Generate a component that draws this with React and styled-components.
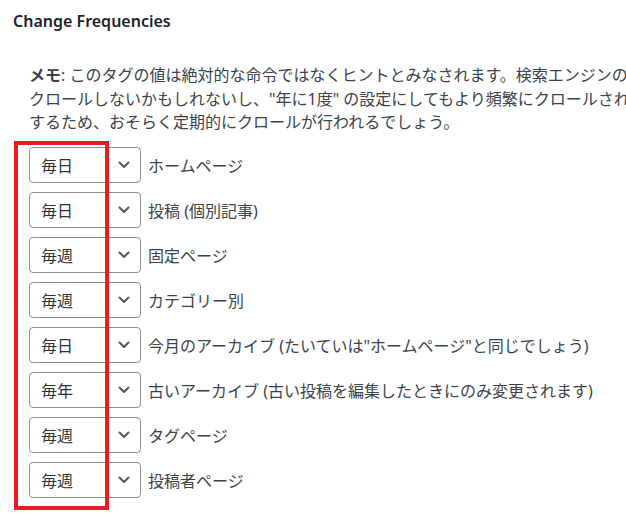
import React from 'react'
import styled, { createGlobalStyle } from 'styled-components';

const GlobalStyle = createGlobalStyle`
body {
  margin: 0;
  background: #ffffff;
  overflow: hidden;
  font-family: "Noto Sans", "Noto Sans CJK JP", sans-serif;
}
`

const Page = styled.div`
width: 626px;
height: 524px;
overflow: hidden;
padding: 11px 0 0 13px;
box-sizing: border-box;
`

const Heading = styled.h3`
margin: 0;
font-size: 16px;
line-height: 20px;
font-weight: 600;
color: #1d2327;
`

const Section = styled.div`
margin: 33px 0 0 16px;
`

const Note = styled.p`
margin: 0;
width: 900px;
font-size: 16px;
line-height: 23.5px;
color: #3c434a;
`

const Line = styled.span`
display: block;
white-space: nowrap;
`

const List = styled.div`
position: relative;
display: flex;
flex-direction: column;
gap: 9px;
margin-top: 12px;
`

const Row = styled.div`
display: flex;
align-items: center;
height: 36px;
`

const Select = styled.div`
width: 112px;
height: 36px;
box-sizing: border-box;
border: 1px solid #8c8f94;
border-radius: 4px;
background: #fff;
display: flex;
align-items: center;
justify-content: space-between;
padding: 0 10px 0 11px;
font-size: 16px;
color: #2c3338;
`

const Label = styled.span`
margin-left: 7px;
font-size: 16px;
color: #3c434a;
white-space: nowrap;
`

const Highlight = styled.div`
position: absolute;
top: -6px;
left: -15px;
width: 95px;
height: 369px;
box-sizing: border-box;
border: 4px solid #e81c24;
pointer-events: none;
`

const Chevron = () => (
  <svg width="12" height="8" viewBox="0 0 12 8">
    <polyline points="1.5,1.5 6,6 10.5,1.5" fill="none" stroke="#50575e" strokeWidth="2" strokeLinecap="round" strokeLinejoin="round" />
  </svg>
)

const rows = [
  { value: '毎日', label: 'ホームページ' },
  { value: '毎日', label: '投稿 (個別記事)' },
  { value: '毎週', label: '固定ページ' },
  { value: '毎週', label: 'カテゴリー別' },
  { value: '毎日', label: '今月のアーカイブ (たいていは"ホームページ"と同じでしょう)' },
  { value: '毎年', label: '古いアーカイブ (古い投稿を編集したときにのみ変更されます)' },
  { value: '毎週', label: 'タグページ' },
  { value: '毎週', label: '投稿者ページ' },
]

const App = () => {
  return (
    <Page>
      <GlobalStyle />
      <Heading>Change Frequencies</Heading>
      <Section>
        <Note>
          <Line><b>メモ</b>: このタグの値は絶対的な命令ではなくヒントとみなされます。検索エンジンの</Line>
          <Line>クロールしないかもしれないし、"年に1度" の設定にしてもより頻繁にクロールされ</Line>
          <Line>するため、おそらく定期的にクロールが行われるでしょう。</Line>
        </Note>
        <List>
          {rows.map((r, i) => (
            <Row key={i}>
              <Select>
                <span>{r.value}</span>
                <Chevron />
              </Select>
              <Label>{r.label}</Label>
            </Row>
          ))}
          <Highlight />
        </List>
      </Section>
    </Page>
  )
}

export default App
